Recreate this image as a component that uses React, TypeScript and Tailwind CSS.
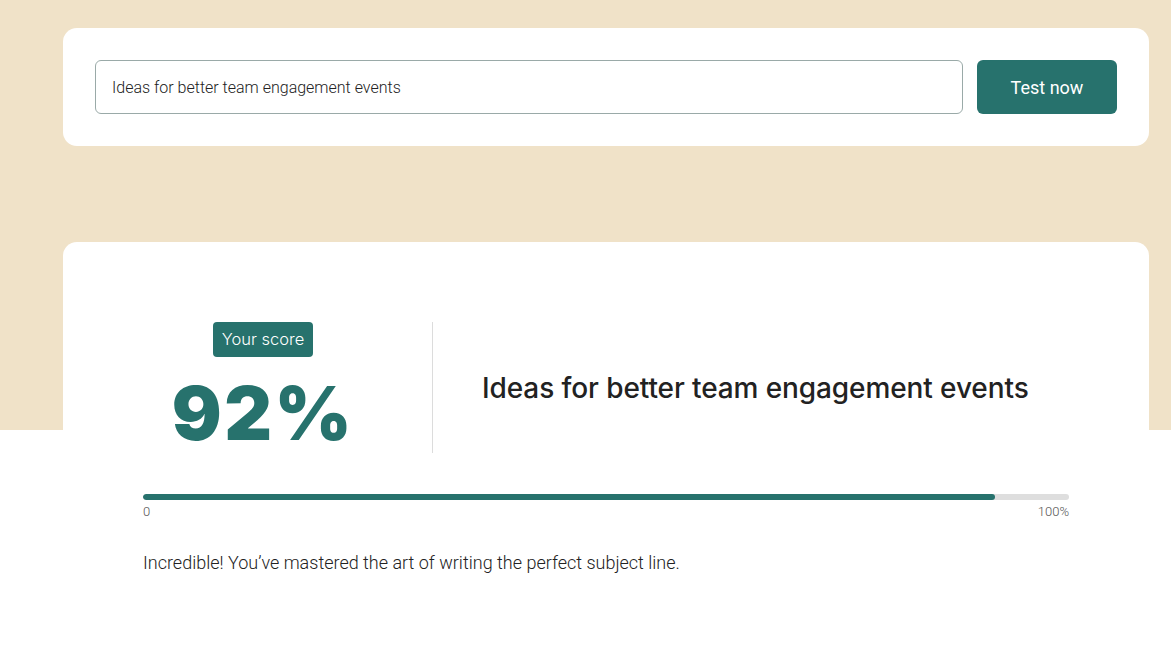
import { useState } from "react";

const teal = "bg-[#27726d]";

const ScoreBar = ({ score }: { score: number }) => {
  return (
    <div>
      <div className="h-[6px] w-full rounded-full bg-[#dedede] overflow-hidden">
        <div className={`h-full rounded-full ${teal}`} style={{ width: `${score}%` }}></div>
      </div>
      <div className="mt-[4px] flex justify-between text-[13px] leading-[16px] text-[#555555] font-['Roboto',sans-serif] font-light">
        <span>0</span>
        <span>100%</span>
      </div>
    </div>
  );
};

export default function App() {
  const [subject, setSubject] = useState("Ideas for better team engagement events");
  const score = 92;

  return (
    <div className="min-h-[648px] bg-[linear-gradient(to_bottom,#f0e2c8_430px,#ffffff_430px)] pt-[28px] font-['Roboto',sans-serif]">
      {/* Input card */}
      <div className="ml-[63px] w-[1086px] rounded-[14px] bg-white p-[32px] flex gap-[14px]">
        <input
          value={subject}
          onChange={(e) => setSubject(e.target.value)}
          className="h-[54px] flex-1 rounded-[6px] border border-[#9aaaa8] px-[16px] text-[16px] font-light text-[#222] outline-none font-['Roboto',sans-serif]"
        />
        <button className={`h-[54px] w-[140px] rounded-[6px] ${teal} text-[18px] font-normal text-white`}>
          Test now
        </button>
      </div>

      {/* Result card */}
      <div className="ml-[63px] mt-[96px] w-[1086px] rounded-t-[14px] bg-white px-[80px] pt-[80px] pb-[60px]">
        <div className="flex items-stretch">
          <div className="w-[240px] flex flex-col items-center">
            <span className={`${teal} rounded-[4px] px-[9px] h-[35px] flex items-center text-[16.5px] font-light text-white font-['Inter',sans-serif]`}>
              Your score
            </span>
            <div className="mt-[14px] text-[74px] leading-[84px] font-black text-[#27726d] tracking-[2.5px] font-['Inter',sans-serif]">
              {score}%
            </div>
          </div>
          <div className="ml-[49px] border-l border-[#dcdcdc] pl-[49px] flex items-center h-[131px]">
            <h2 className="text-[28px] font-medium text-[#222] tracking-[-0.1px] font-['Inter',sans-serif]">
              {subject}
            </h2>
          </div>
        </div>

        <div className="mt-[39px]">
          <ScoreBar score={score} />
        </div>

        <p className="mt-[29px] text-[18px] font-light text-[#222]">
          Incredible! You’ve mastered the art of writing the perfect subject line.
        </p>
      </div>
    </div>
  );
}
